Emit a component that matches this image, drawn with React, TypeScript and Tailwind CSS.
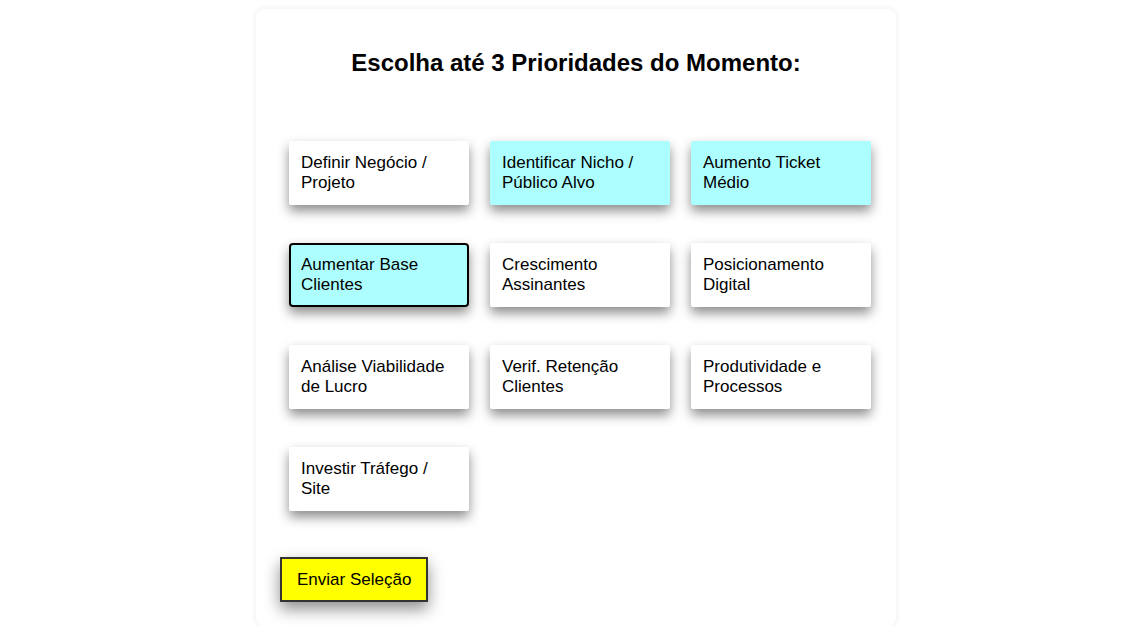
import { useState } from 'react'

const options = [
  'Definir Negócio / Projeto',
  'Identificar Nicho / Público Alvo',
  'Aumento Ticket Médio',
  'Aumentar Base Clientes',
  'Crescimento Assinantes',
  'Posicionamento Digital',
  'Análise Viabilidade de Lucro',
  'Verif. Retenção Clientes',
  'Produtividade e Processos',
  'Investir Tráfego / Site',
]

export default function App() {
  const [selected, setSelected] = useState<string[]>([
    'Identificar Nicho / Público Alvo',
    'Aumento Ticket Médio',
    'Aumentar Base Clientes',
  ])
  const focused = 'Aumentar Base Clientes'

  const toggle = (opt: string) => {
    if (selected.includes(opt)) {
      setSelected(selected.filter((s) => s !== opt))
    } else if (selected.length < 3) {
      setSelected([...selected, opt])
    }
  }

  return (
    <div className="bg-white flex justify-center pt-[9px] pl-[23px] font-['Liberation_Sans',Arial,sans-serif] text-black">
      <div className="w-[640px] h-[617px] bg-white rounded-lg shadow-[0_0_6px_rgba(0,0,0,0.08)] flex flex-col">
        <h2 className="mt-[40px] text-center text-[24px] leading-[28px] font-bold">
          Escolha até 3 Prioridades do Momento:
        </h2>
        <div className="mt-[64px] ml-[33px] grid grid-cols-[180px_180px_180px] gap-x-[21px] gap-y-[38px]">
          {options.map((opt) => {
            const isSel = selected.includes(opt)
            const isFocus = opt === focused
            return (
              <button
                key={opt}
                onClick={() => toggle(opt)}
                className={`h-[64px] text-left text-[17px] leading-[20px] rounded-[2px] shadow-[0_6px_12px_rgba(0,0,0,0.45)] ${
                  isSel ? 'bg-[#adffff]' : 'bg-white'
                } ${
                  isFocus
                    ? 'border-2 border-black rounded-[4px] pl-[10px] pr-[10px]'
                    : 'pl-[12px] pr-[12px]'
                }`}
              >
                {opt}
              </button>
            )
          })}
        </div>
        <div className="mt-[46px] ml-[24px]">
          <button className="h-[45px] px-[15px] bg-[#ffff00] border-2 border-[#333] text-[17px] leading-[20px] shadow-[0_7px_16px_rgba(0,0,0,0.45)]">
            Enviar Seleção
          </button>
        </div>
      </div>
    </div>
  )
}
